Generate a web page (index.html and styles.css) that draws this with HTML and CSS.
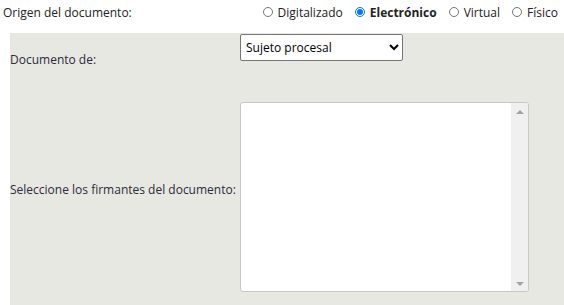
FILE: index.html
```html
<!DOCTYPE html>
<html lang="es">
<head>
    <meta charset="UTF-8">
    <title>Origen del documento</title>
    <link rel="stylesheet" href="styles.css">
</head>
<body>

    <div class="origin-row">
        <span class="origin-label">Origen del documento:</span>
        <div class="origin-options">
            <label class="option"><input type="radio" name="origen"> Digitalizado</label>
            <label class="option checked"><input type="radio" name="origen" checked> Electrónico</label>
            <label class="option"><input type="radio" name="origen"> Virtual</label>
            <label class="option"><input type="radio" name="origen"> Físico</label>
        </div>
    </div>

    <div class="panel">
        <div class="field-label first">Documento de:</div>
        <div class="field-control first">
            <select class="doc-select">
                <option>Sujeto procesal</option>
            </select>
        </div>

        <div class="field-label second">Seleccione los firmantes del documento:</div>
        <div class="field-control second">
            <div class="signers">
                <div class="signers-list"></div>
                <div class="signers-scroll">
                    <span class="arrow up"></span>
                    <span class="arrow down"></span>
                </div>
            </div>
        </div>
    </div>

</body>
</html>
```

FILE: styles.css
```css
* {
    box-sizing: border-box;
    margin: 0;
    padding: 0;
}

body {
    font-family: 'Open Sans', sans-serif;
    font-size: 12px;
    color: #222;
    background-color: #fff;
    overflow: hidden;
}

.origin-row {
    display: flex;
    justify-content: space-between;
    align-items: center;
    height: 33px;
    padding: 0 6px 9px 3px;
}

.origin-options {
    display: flex;
    align-items: center;
}

.option {
    display: flex;
    align-items: center;
    gap: 5px;
    margin-left: 12px;
}

.option input {
    width: 10px;
    height: 10px;
    margin: 0;
    accent-color: #0075ff;
}

.option.checked {
    font-weight: bold;
}

.panel {
    display: grid;
    grid-template-columns: 230px 1fr;
    grid-template-rows: 50px 1fr;
    margin-left: 10px;
    background-color: #e8e8e3;
    height: 272px;
}

.field-label {
    display: flex;
    align-items: center;
    color: #2a2a3a;
}

.field-label.first {
    padding-top: 2px;
}

.field-label.second {
    padding-bottom: 10px;
}

.field-control.first {
    padding-top: 1px;
}

.field-control.second {
    padding-top: 19px;
}

.doc-select {
    width: 163px;
    height: 27px;
    font-family: 'Open Sans', sans-serif;
    font-size: 12px;
    color: #000;
    border: 1px solid #767676;
    border-radius: 2px;
    background-color: #fff;
    padding-left: 1px;
}

.signers {
    display: flex;
    width: 289px;
    height: 190px;
    background-color: #fff;
    border: 1px solid #c8c8c8;
    border-radius: 3px;
    overflow: hidden;
}

.signers-list {
    flex: 1;
}

.signers-scroll {
    display: flex;
    flex-direction: column;
    justify-content: space-between;
    align-items: center;
    width: 17px;
    padding: 7px 0 5px;
    background-color: #f0f0f0;
}

.arrow {
    width: 0;
    height: 0;
    border-left: 4px solid transparent;
    border-right: 4px solid transparent;
}

.arrow.up {
    border-bottom: 4px solid #a3a3a3;
}

.arrow.down {
    border-top: 4px solid #a3a3a3;
}
```
